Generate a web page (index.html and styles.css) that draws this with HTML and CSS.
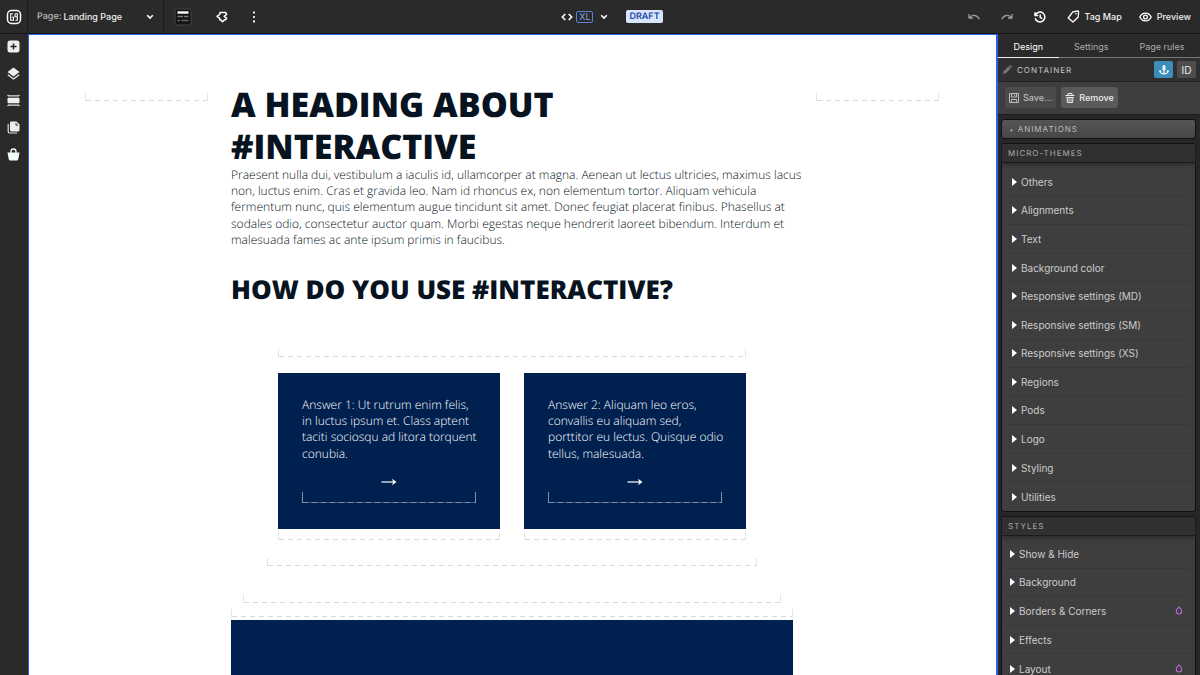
FILE: index.html
```html
<!DOCTYPE html>
<html lang="en">
<head>
    <meta charset="UTF-8">
    <meta name="viewport" content="width=device-width, initial-scale=1.0">
    <title>Landing Page</title>
    <link rel="stylesheet" href="styles.css">
</head>
<body>
    <header class="toolbar">
        <div class="toolbar-left">
            <button class="logo" aria-label="Home">
                <svg width="16" height="16" viewBox="0 0 16 16" fill="none" stroke="#fff">
                    <rect x="1.5" y="1.5" width="13" height="13" rx="4" stroke-width="1.5"/>
                    <path d="M7 4.700H4.700V11.300H7.500V8.300H6M9 4.700H11.300V11.300H9.500M9 4.700V7.800H11.300" stroke-width="1.100"/>
                </svg>
            </button>
            <div class="page-picker">
                <label for="page">Page:</label>
                <select id="page">
                    <option>Landing Page</option>
                </select>
                <svg width="8" height="6" viewBox="0 0 8 6" fill="none" stroke="#fff" stroke-width="1.6"><path d="M1.200 1.2L4 4l2.800-2.800"/></svg>
            </div>
            <div class="tools">
                <button aria-label="Page layout">
                    <svg width="18" height="18" viewBox="0 0 18 18">
                        <rect x="1" y="1" width="16" height="16" rx="2" fill="#141414" stroke="#444"/>
                        <path d="M3.500 4.500h11" stroke="#fff" stroke-width="2.400"/>
                        <path d="M3.500 8.500h5.500M10 8.500h4.500" stroke="#777" stroke-width="1.400"/>
                        <path d="M3.500 12.500h2.500M7.500 12.500h7" stroke="#666" stroke-width="1.400"/>
                    </svg>
                </button>
                <button aria-label="Components">
                    <svg width="14" height="14" viewBox="0 0 14 14" fill="none" stroke="#fff" stroke-width="1.500" stroke-linejoin="round">
                        <path d="M5 2.600H10.800L11.600 4.500 9.200 6.300 11.600 8.100 10.800 9.800H9.500L7.500 11.800 5.500 9.800H4.600V8.200L2 6.300 4.600 4.500Z"/>
                    </svg>
                </button>
                <button aria-label="More">
                    <svg width="4" height="12" viewBox="0 0 4 12" fill="#fff"><circle cx="2" cy="1.6" r="1.1"/><circle cx="2" cy="6" r="1.1"/><circle cx="2" cy="10.4" r="1.1"/></svg>
                </button>
            </div>
        </div>
        <div class="toolbar-center">
            <svg width="12" height="8" viewBox="0 0 12 8" fill="none" stroke="#fff" stroke-width="1.6"><path d="M4.3 1L1.3 4l3 3M7.7 1l3 3-3 3"/></svg>
            <button class="breakpoint">XL</button>
            <button class="chevron" aria-label="Choose breakpoint">
                <svg width="8" height="6" viewBox="0 0 8 6" fill="none" stroke="#fff" stroke-width="1.6"><path d="M1.200 1.2L4 4l2.800-2.800"/></svg>
            </button>
            <span class="status">DRAFT</span>
        </div>
        <div class="toolbar-right">
            <button class="icon dim" aria-label="Undo">
                <svg width="12" height="8" viewBox="0 0 12 8" fill="none" stroke="currentColor" stroke-width="1.3"><path d="M1 1v4h4M1.3 4.7C4.5 1.2 9.2 1.8 11.2 6.3"/></svg>
            </button>
            <button class="icon dim" aria-label="Redo">
                <svg width="12" height="8" viewBox="0 0 12 8" fill="none" stroke="currentColor" stroke-width="1.3"><path d="M11 1v4H7M10.7 4.7C7.5 1.2 2.8 1.8.8 6.3"/></svg>
            </button>
            <button class="icon" aria-label="History">
                <svg width="12" height="12" viewBox="0 0 12 12" fill="none" stroke="#fff" stroke-width="1.5"><path d="M1 1.2v3.3h3.3M1.4 4.2A4.9 4.9 0 1 1 1.2 7.2M6.2 3.4v3l2 1.2"/></svg>
            </button>
            <button class="with-text">
                <svg width="13" height="13" viewBox="0 0 13 13" fill="none" stroke="#fff" stroke-width="1.3" stroke-linejoin="round"><path d="M5.800 1.800L10.800 1q.8 0 .8.800L11.200 7 6 12 1.200 8Z"/><circle cx="9" cy="3.800" r=".8" fill="#fff" stroke="none"/></svg>
                Tag Map
            </button>
            <button class="with-text">
                <svg width="13" height="10" viewBox="0 0 13 10" fill="none" stroke="#fff" stroke-width="1.3"><path d="M.8 5C3.3-.2 9.7-.2 12.2 5 9.7 10.2 3.3 10.2.8 5Z"/><circle cx="6.5" cy="5" r="1.9"/></svg>
                Preview
            </button>
        </div>
    </header>

    <div class="workspace">
        <nav class="rail">
            <button aria-label="Add">
                <svg width="13" height="13" viewBox="0 0 13 13"><rect x=".5" y=".5" width="12" height="12" rx="2.5" fill="#eee"/><path d="M6.5 3.5v6M3.5 6.5h6" stroke="#222" stroke-width="1.5"/></svg>
            </button>
            <button aria-label="Layers">
                <svg width="13" height="13" viewBox="0 0 13 13"><path d="M6.5.5l6 4.5-6 4.5-6-4.5Z" fill="#eee"/><path d="M.8 7.7l5.7 4.2 5.7-4.2" fill="none" stroke="#eee" stroke-width="1.3"/></svg>
            </button>
            <button aria-label="Sections">
                <svg width="13" height="13" viewBox="0 0 13 13"><path d="M.5 1l1 .8h10l1-.8M.5 12l1-.8h10l1 .8" fill="none" stroke="#ddd" stroke-width="1.200"/><rect x=".5" y="3.800" width="12" height="5.400" rx="1" fill="#eee"/></svg>
            </button>
            <button aria-label="Pages">
                <svg width="13" height="13" viewBox="0 0 13 13"><path d="M4 .5h5.5l3 3V9q0 1.5-1.5 1.5H4.500Q3 10.500 3 9V1.500Q3 .5 4 .5Z" fill="#eee"/><path d="M9 2v2.200h2" stroke="#333" fill="none"/><path d="M1.200 3v7.500q0 1.500 1.500 1.500H10" fill="none" stroke="#ddd" stroke-width="1.200"/></svg>
            </button>
            <button aria-label="Shop">
                <svg width="13" height="13" viewBox="0 0 13 13"><path d="M.5 4.500h12l-1.200 6.500q-.3 1.500-1.800 1.500h-6q-1.500 0-1.800-1.500Z" fill="#f4fafa"/><path d="M4 5V3.500a2.500 2.500 0 0 1 5 0V5" fill="none" stroke="#f4fafa" stroke-width="1.300"/></svg>
            </button>
        </nav>

        <main class="canvas">
            <div class="page-grid">
                <div class="side"><div class="dropzone"></div></div>
                <div class="content">
                    <h1>A HEADING ABOUT #INTERACTIVE</h1>
                    <p class="intro">Praesent nulla dui, vestibulum a iaculis id, ullamcorper at magna. Aenean ut lectus ultricies, maximus lacus non, luctus enim. Cras et gravida leo. Nam id rhoncus ex, non elementum tortor. Aliquam vehicula fermentum nunc, quis elementum augue tincidunt sit amet. Donec feugiat placerat finibus. Phasellus at sodales odio, consectetur auctor quam. Morbi egestas neque hendrerit laoreet bibendum. Interdum et malesuada fames ac ante ipsum primis in faucibus.</p>
                    <h2>HOW DO YOU USE #INTERACTIVE?</h2>
                    <div class="answers">
                        <div class="answers-inner">
                            <div class="dropzone"></div>
                            <div class="cards">
                                <div class="card-column">
                                    <article class="card">
                                        <p>Answer 1: Ut rutrum enim felis, in luctus ipsum et. Class aptent taciti sociosqu ad litora torquent conubia.</p>
                                        <a href="#answer-1" aria-label="Go to answer 1">
                                            <svg width="16" height="8" viewBox="0 0 16 8"><path d="M.5 4H13" stroke="#fff" stroke-width="1.2"/><path d="M11 .8L15.500 4 11 7.200 12.200 4Z" fill="#fff"/></svg>
                                        </a>
                                        <div class="dropzone dropzone-dark"></div>
                                    </article>
                                    <div class="dropzone"></div>
                                </div>
                                <div class="card-column">
                                    <article class="card">
                                        <p>Answer 2: Aliquam leo eros, convallis eu aliquam sed, porttitor eu lectus. Quisque odio tellus, malesuada.</p>
                                        <a href="#answer-2" aria-label="Go to answer 2">
                                            <svg width="16" height="8" viewBox="0 0 16 8"><path d="M.5 4H13" stroke="#fff" stroke-width="1.2"/><path d="M11 .8L15.500 4 11 7.200 12.200 4Z" fill="#fff"/></svg>
                                        </a>
                                        <div class="dropzone dropzone-dark"></div>
                                    </article>
                                    <div class="dropzone"></div>
                                </div>
                            </div>
                        </div>
                        <div class="dropzone"></div>
                    </div>
                    <div class="section-end"><div class="dropzone"></div></div>
                    <div class="dropzone"></div>
                    <section class="answer-block" id="answer-1"></section>
                </div>
                <div class="side"><div class="dropzone"></div></div>
            </div>
        </main>

        <aside class="sidebar">
            <div class="tabs" role="tablist">
                <button role="tab" class="tab active" aria-selected="true">Design</button>
                <button role="tab" class="tab">Settings</button>
                <button role="tab" class="tab">Page rules</button>
            </div>
            <div class="element-bar">
                <svg width="9" height="9" viewBox="0 0 9 9" fill="#777"><path d="M0 9l.7-2.800L5.500 1.400l2.100 2.100L2.800 8.300ZM6 .9l.7-.7q.4-.3.800 0l1.300 1.300q.3.400 0 .800l-.7.700Z"/></svg>
                <span class="element-name">CONTAINER</span>
                <button class="square anchor" aria-label="Anchor">
                    <svg width="10" height="10" viewBox="0 0 10 10" fill="none" stroke="#fff" stroke-width="1.2"><circle cx="5" cy="1.700" r="1"/><path d="M5 2.700V9M3 4.200h4M1 5.800C1.300 10 8.700 10 9 5.800M.4 7l.7-1.200 1 .9M9.600 7l-.7-1.200-1 .9"/></svg>
                </button>
                <button class="square">ID</button>
            </div>
            <div class="actions">
                <button class="action muted">
                    <svg width="10" height="10" viewBox="0 0 10 10" fill="none" stroke="currentColor"><path d="M.5.5h9v9h-9ZM2.500.5v3.500h5V.5M2.500 9.500V6.500h5v3M5.500 1.500v1.500"/></svg>
                    Save...
                </button>
                <button class="action">
                    <svg width="10" height="10" viewBox="0 0 10 10" fill="none" stroke="currentColor"><path d="M.5 2.500h9M3 2.500v-2h4v2M1.500 4.500h7M2 4.500l.5 5h5l.5-5M4 5.500v3M6 5.500v3"/></svg>
                    Remove
                </button>
            </div>
            <div class="panels">
                <button class="animations"><span class="plus">+</span> ANIMATIONS</button>
                <section class="panel">
                    <h3>MICRO-THEMES</h3>
                    <ul class="rows themes">
                        <li><button>Others</button></li>
                        <li><button>Alignments</button></li>
                        <li><button>Text</button></li>
                        <li><button>Background color</button></li>
                        <li><button>Responsive settings (MD)</button></li>
                        <li><button>Responsive settings (SM)</button></li>
                        <li><button>Responsive settings (XS)</button></li>
                        <li><button>Regions</button></li>
                        <li><button>Pods</button></li>
                        <li><button>Logo</button></li>
                        <li><button>Styling</button></li>
                        <li><button>Utilities</button></li>
                    </ul>
                </section>
                <section class="panel">
                    <h3>STYLES</h3>
                    <ul class="rows style-rows">
                        <li><button>Show &amp; Hide</button></li>
                        <li><button>Background</button></li>
                        <li><button>Borders &amp; Corners
                            <svg width="8" height="9" viewBox="0 0 8 9" fill="none" stroke="#b565d0" stroke-width="1.200"><path d="M4 1Q6.700 3.300 6.700 5.300A2.700 2.700 0 0 1 1.300 5.300Q1.300 3.300 4 1Z"/></svg></button></li>
                        <li><button>Effects</button></li>
                        <li><button>Layout
                            <svg width="8" height="9" viewBox="0 0 8 9" fill="none" stroke="#b565d0" stroke-width="1.200"><path d="M4 1Q6.700 3.300 6.700 5.300A2.700 2.700 0 0 1 1.300 5.300Q1.300 3.300 4 1Z"/></svg></button></li>
                    </ul>
                </section>
            </div>
        </aside>
    </div>
</body>
</html>
```
FILE: styles.css
```css
* {
    box-sizing: border-box;
}
body {
    margin: 0;
    height: 100vh;
    display: flex;
    flex-direction: column;
    overflow: hidden;
    background-color: #2a2a2a;
    font-family: Inter, sans-serif;
    font-size: 9px;
    color: #eee;
    text-rendering: geometricPrecision;
}
button, select {
    padding: 0;
    border: none;
    background-color: transparent;
    font: inherit;
    color: inherit;
    cursor: pointer;
}
button {
    display: flex;
    align-items: center;
    justify-content: center;
}
svg {
    display: block;
    flex-shrink: 0;
}

/* top toolbar */
.toolbar {
    display: flex;
    align-items: stretch;
    height: 34px;
    flex-shrink: 0;
    border-bottom: 1px solid #161616;
}
.toolbar-left {
    flex: 1;
    display: flex;
}
.logo {
    width: 28px;
    border-right: 1px solid #1a1a1a;
}
.page-picker {
    width: 136px;
    padding: 0 9px;
    display: flex;
    align-items: center;
    gap: 2px;
    border-right: 1px solid #1a1a1a;
    font-weight: 500;
}
.page-picker label {
    color: #bbb;
}
.page-picker select {
    flex: 1;
    appearance: none;
}
.tools {
    display: flex;
    align-items: center;
    gap: 23px;
    padding-left: 10px;
}
.toolbar-center {
    display: flex;
    align-items: center;
    gap: 3px;
    padding-left: 33px;
}
.breakpoint {
    width: 17px;
    height: 12px;
    border: 1px solid #5b82cc;
    border-radius: 2px;
    color: #7fa5ef;
}
.chevron {
    width: 15px;
}
.status {
    margin-left: 12px;
    padding: 0 3px;
    line-height: 13px;
    border-radius: 2px;
    background-color: #d9e5fb;
    color: #1d45a8;
    font-weight: 600;
}
.toolbar-right {
    flex: 1;
    display: flex;
    align-items: center;
    justify-content: flex-end;
    gap: 17px;
    padding-right: 9px;
}
.icon {
    margin-right: 4px;
}
.dim {
    color: #999;
}
.with-text {
    gap: 5px;
    font-weight: 500;
}

.workspace {
    flex: 1;
    min-height: 0;
    display: flex;
}
.rail {
    width: 28px;
    padding: 6px 1px 0 0;
    display: flex;
    flex-direction: column;
    align-items: center;
    gap: 14px;
}

/* page canvas */
.canvas {
    flex: 1;
    padding-right: 1px;
    overflow: hidden;
    border: 1px solid #2563eb;
    border-right-width: 2px;
    border-bottom: none;
    background-color: #fff;
    color: #071320;
    font-family: "Open Sans", sans-serif;
}
.page-grid {
    max-width: 878px;
    margin: 0 auto;
    padding: 48px 12px 0;
    display: grid;
    grid-template-columns: 1fr 562px 1fr;
    gap: 23px;
}
.side {
    padding-top: 10px;
}
.dropzone {
    height: 8px;
    border: 1px solid #e4e4e4;
    border-width: 0 1px;
    background: repeating-linear-gradient(90deg, #d8d8d8 0 5px, transparent 5px 9px) left bottom / 100% 1px no-repeat;
}
h1 {
    margin: 0;
    font-size: 34px;
    line-height: 42px;
    font-weight: 800;
}
p {
    margin: 0;
    font-size: 12px;
    line-height: 1.35;
    font-weight: 300;
}
.intro {
    margin-right: -12px;
}
h2 {
    margin: 24px 0 0;
    font-size: 26px;
    line-height: 34px;
    font-weight: 800;
}
.answers {
    padding: 43px 36px 0;
}
.answers-inner {
    padding: 0 11px 18px;
}
.cards {
    margin-top: 16px;
    display: grid;
    grid-template-columns: 1fr 1fr;
    gap: 24px;
}
.card {
    margin-bottom: 3px;
    padding: 24px 24px 26px;
    background-color: #002050;
    color: #fff;
}
.card p {
    margin-right: -4px;
}
.card a {
    display: flex;
    justify-content: center;
    padding: 16px 0 6px;
}
.dropzone-dark {
    height: 11px;
    border-color: #8290a8;
    background: repeating-linear-gradient(90deg, #8290a8 0 5px, #43597d 5px 9px) left bottom / 100% 1px no-repeat;
}
.section-end {
    padding: 29px 12px 6px;
}
.answer-block {
    height: 200px;
    margin-top: 3px;
    background-color: #002050;
}

/* right sidebar */
.sidebar {
    width: 202px;
    display: flex;
    flex-direction: column;
}
.tabs {
    display: flex;
    height: 24px;
    flex-shrink: 0;
    border-bottom: 1px solid #777;
}
.tab {
    padding: 2px 14px 0;
    color: #aaa;
    flex: 1 0 auto;
}
.tab.active {
    color: #fff;
    box-shadow: 0 1px #eee;
}
.element-bar {
    display: flex;
    align-items: center;
    gap: 4px;
    height: 24px;
    flex-shrink: 0;
    padding: 0 4px 0 5px;
    background-color: #303030;
    border-bottom: 1px solid #222;
}
.element-name {
    flex: 1;
    margin-left: 1px;
    font-size: 8px;
    letter-spacing: 1px;
    color: #ccc;
}
.square {
    width: 19px;
    height: 17px;
    border-radius: 2px;
    background-color: #4d4d4d;
    font-size: 10px;
}
.anchor {
    background-color: #3b8dba;
}
.actions {
    display: flex;
    gap: 5px;
    padding: 5px 7px 6px;
    background-color: #3e3e3e;
}
.action {
    height: 21px;
    padding: 0 4px;
    gap: 4px;
    border-radius: 3px;
    background-color: #5a5a5a;
    font-weight: 500;
}
.action.muted {
    background-color: #4b4b4b;
    color: #bbb;
}
.panels {
    flex: 1;
    padding: 4px 4px 0 3px;
    overflow: hidden;
    border-top: 1px solid #1c1c1c;
    background-color: #272727;
}
.animations, h3 {
    font-size: 8px;
    font-weight: 400;
    letter-spacing: 1px;
    color: #aaa;
}
.animations {
    width: 100%;
    height: 20px;
    padding-left: 7px;
    justify-content: flex-start;
    gap: 3px;
    border: 1px solid #111;
    border-radius: 3px;
    background-image: linear-gradient(#555, #464646);
    color: #bbb;
}
.plus {
    font-size: 7px;
}
.panel {
    margin-top: 4px;
    border: 1px solid #111;
    border-radius: 3px;
    background-color: #3e3e3e;
}
h3 {
    margin: 0;
    padding-left: 6px;
    line-height: 18px;
    border-bottom: 1px solid #1c1c1c;
    background-color: #303030;
    box-shadow: 0 2px 4px #2c2c2c;
}
.rows {
    margin: 0;
    padding: 5px 4px 0 6px;
    list-style: none;
    display: grid;
    grid-auto-rows: 1fr;
}
.themes {
    min-height: 348px;
}
.style-rows {
    min-height: 147px;
    padding: 4px 4px 0;
}
.rows li {
    display: flex;
    border-bottom: 1px solid #383838;
}
.rows li:last-child {
    border-bottom: none;
}
.rows button {
    flex: 1;
    padding: 0 8px 0 4px;
    justify-content: flex-start;
    gap: 4px;
    font-size: 10px;
    color: #ccc;
}
.rows button::before {
    content: "";
    border: 4px solid transparent;
    border-left: 5px solid #fff;
    border-right: none;
}
.rows svg {
    margin-left: auto;
}
```
